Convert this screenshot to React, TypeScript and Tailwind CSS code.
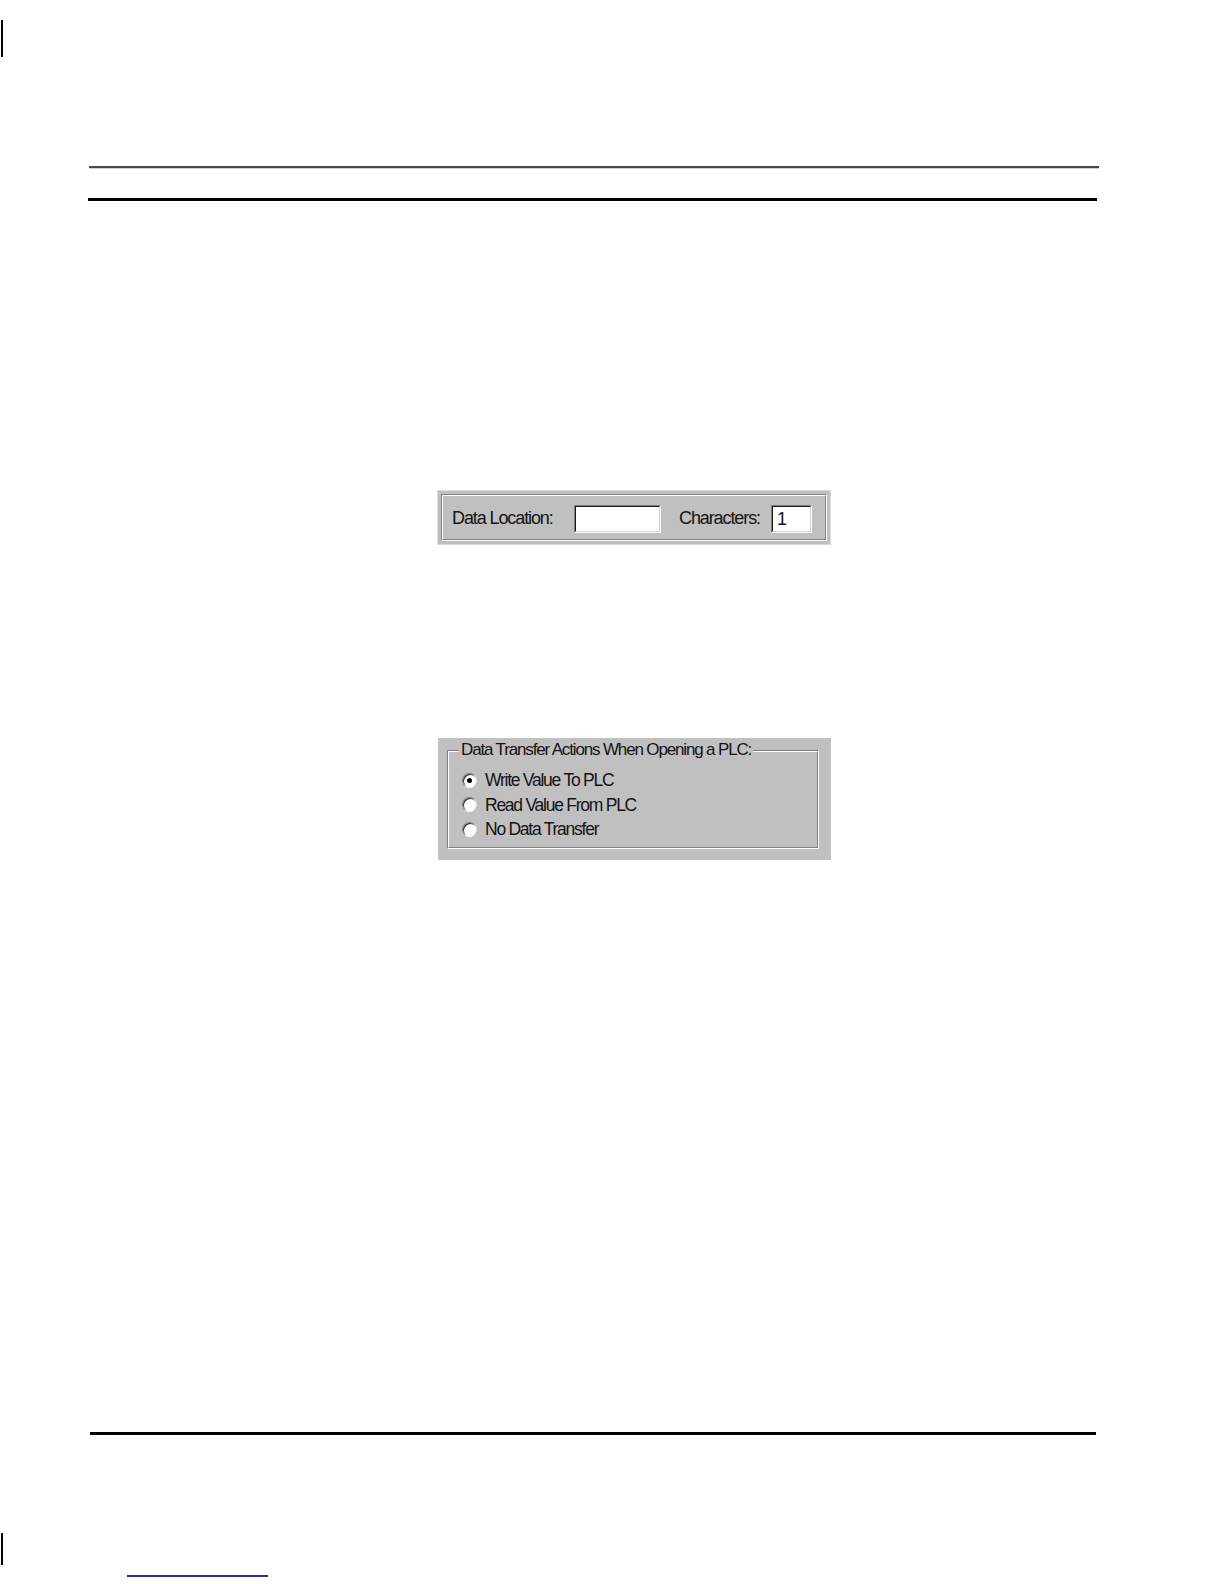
import React from 'react';

// Sunken (Win9x style) text box
const SunkenInput: React.FC<{ width: string; value?: string }> = ({ width, value }) => (
  <div className={`${width} h-[28px] border border-t-[#808080] border-l-[#808080] border-b-white border-r-white`}>
    <div className="h-full w-full bg-white border border-t-[#1a1a1a] border-l-[#1a1a1a] border-b-[#d4d4d4] border-r-[#d4d4d4] flex items-center pl-[4px] leading-none">
      {value}
    </div>
  </div>
);

const Radio: React.FC<{ checked?: boolean; label: string }> = ({ checked, label }) => (
  <div className="h-[24.5px] flex items-center">
    <div className="w-[15px] h-[15px] rounded-full border border-t-[#808080] border-l-[#808080] border-b-white border-r-[#e4e4e4]">
      <div className="w-full h-full rounded-full bg-white shadow-[inset_1px_1px_0_#303030] flex items-center justify-center">
        {checked && <div className="w-[5px] h-[5px] rounded-full bg-black" />}
      </div>
    </div>
    <span className="ml-[8px] text-[17.5px] tracking-[-1.25px]">{label}</span>
  </div>
);

const App: React.FC = () => {
  return (
    <div
      className="w-[1224px] h-[1584px] bg-white flex flex-col overflow-hidden text-[#141414] text-[18px] tracking-[-1.1px]"
      style={{ fontFamily: '"Liberation Sans", Arial, sans-serif' }}
    >
      {/* top margin mark */}
      <div className="ml-[1px] mt-[20px] w-[2px] h-[37px] bg-black" />

      {/* header rules */}
      <div className="ml-[89px] mt-[109px] w-[1010px] border-t-2 border-t-[#4a4a4a] border-b border-b-[#d0d0d0]" />
      <div className="ml-[88px] mt-[29px] w-[1009px] h-[3px] bg-black" />

      {/* Data location panel */}
      <div className="ml-[437px] mt-[289px] w-[394px] h-[55px] bg-[#c0c0c0] border border-[#dadada] p-[3px]">
        <div className="h-full border border-t-[#808080] border-l-[#808080] border-b-white border-r-white">
          <div className="h-full border border-t-white border-l-white border-b-[#808080] border-r-[#808080] flex items-center pl-[9px] pt-[2px]">
            <span className="w-[122px]">Data Location:</span>
            <SunkenInput width="w-[87px]" />
            <span className="ml-[18px] w-[92px]">Characters:</span>
            <SunkenInput width="w-[41px]" value="1" />
          </div>
        </div>
      </div>

      {/* Data transfer group */}
      <div className="ml-[438px] mt-[193px] w-[393px] h-[122px] bg-[#c0c0c0] pt-[12px] pl-[9px] pr-[12px] pb-[11px]">
        <div className="relative h-full border border-t-[#808080] border-l-[#808080] border-b-white border-r-white">
          <div className="h-full border border-t-white border-l-white border-b-[#808080] border-r-[#808080] pl-[13px] pt-[16px]">
            <Radio checked label="Write Value To PLC" />
            <Radio label="Read Value From PLC" />
            <Radio label="No Data Transfer" />
          </div>
          <span className="absolute left-[11px] -top-[11px] px-[2px] bg-[#c0c0c0] leading-[20px] text-[17px] tracking-[-1.15px]">
            Data Transfer Actions When Opening a PLC:
          </span>
        </div>
      </div>

      {/* footer rule */}
      <div className="ml-[90px] mt-[572px] w-[1006px] h-[3px] bg-black" />

      {/* bottom margin mark and link underline */}
      <div className="ml-[1px] mt-[98px] w-[2px] h-[32px] bg-black" />
      <div className="ml-[127px] mt-[10px] w-[141px] h-[2px] bg-[#23309e]" />
    </div>
  );
};

export default App;
